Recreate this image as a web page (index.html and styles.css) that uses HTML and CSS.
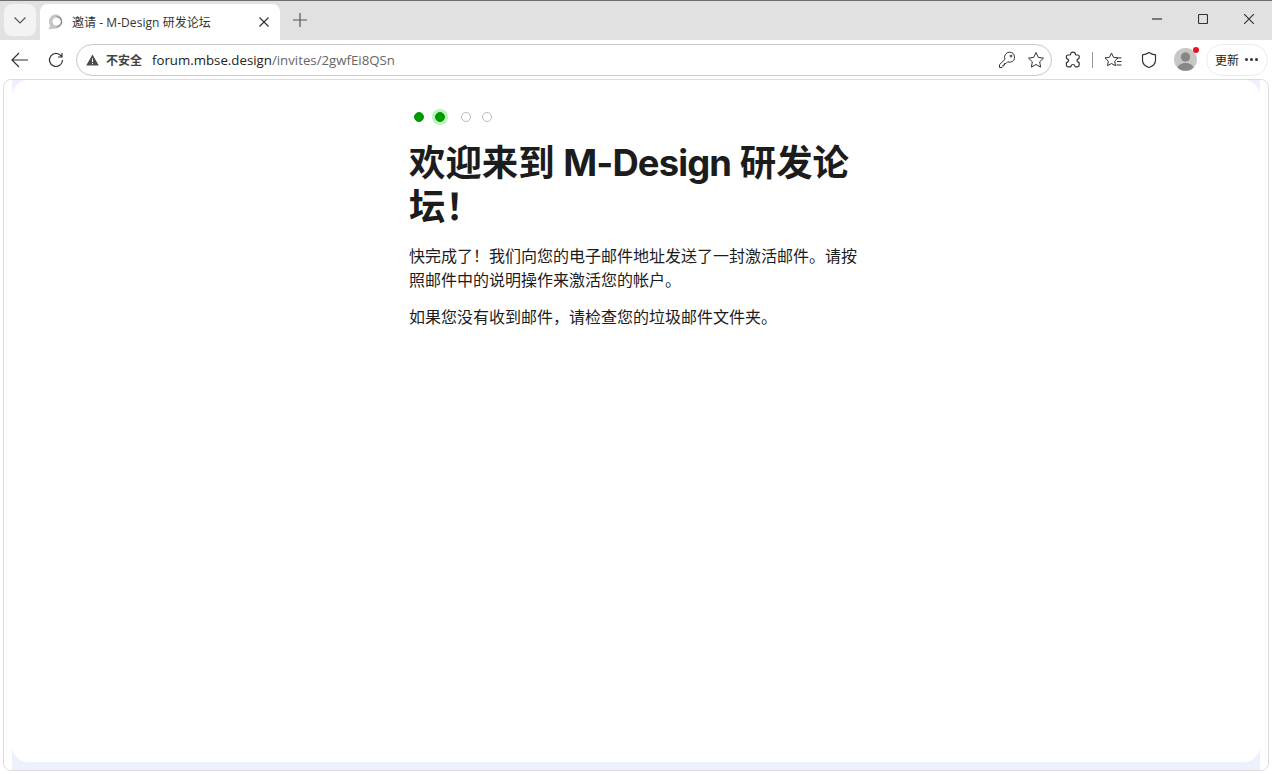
FILE: index.html
```html
<!DOCTYPE html>
<html lang="zh-CN">
<head>
  <meta charset="UTF-8">
  <title>邀请 - M-Design 研发论坛</title>
  <link rel="stylesheet" href="styles.css">
</head>
<body>
  <div class="tabbar">
    <button class="tab-search">
      <svg width="16" height="16" viewBox="0 0 16 16"><path d="M2.500 5.500 8 11l5.500-5.500" class="ln"/></svg>
    </button>
    <div class="tab">
      <svg class="favicon" width="16" height="16" viewBox="0 0 16 16">
        <path d="M8.500.2A7.300 7.300 0 0 0 1 7.600c0 1.500.4 2.900 1.100 4.100L.6 15.800l4.300-1.200A7.400 7.400 0 1 0 8.500.2z" fill="#c6c6c6"/>
        <circle cx="8.600" cy="7.600" r="4.200" fill="#fff"/>
        <path d="M8.600 2.600a5 5 0 0 1 0 10" fill="none" stroke="#8a8a8a" stroke-width="1.300"/>
      </svg>
      <span class="tab-title">邀请 - M-Design 研发论坛</span>
      <svg class="tab-close" width="10" height="10" viewBox="0 0 10 10"><path d="M.5.500l9 9M9.500.500l-9 9" class="ln dark"/></svg>
    </div>
    <svg class="new-tab" width="16" height="16" viewBox="0 0 16 16"><path d="M8 1v14M1 8h14" class="ln"/></svg>
    <div class="win-btns">
      <svg width="10" height="10" viewBox="0 0 10 10"><path d="M0 5h10" class="ln dark"/></svg>
      <svg width="10" height="10" viewBox="0 0 10 10"><rect x=".5" y=".5" width="9" height="9" rx="1" class="ln dark"/></svg>
      <svg width="10" height="10" viewBox="0 0 10 10"><path d="M0 0l10 10M10 0L0 10" class="ln dark"/></svg>
    </div>
  </div>

  <div class="toolbar">
    <svg class="nav-back" width="18" height="16" viewBox="0 0 18 16"><path d="M8 1 1 8l7 7M1 8h16" class="ln dark"/></svg>
    <svg class="nav-reload" width="16" height="16" viewBox="0 0 16 16"><path d="M13.500 4.500A6.500 6.500 0 1 0 14.500 8M14 1v4h-4" class="ln dark"/></svg>
    <div class="omnibox">
      <svg width="13" height="12" viewBox="0 0 13 12"><path d="M6.500.500 12.800 11.500H.2z" fill="#4a4a4a"/><path d="M6.500 4.500v3.500M6.500 9v1.200" stroke="#fff" stroke-width="1"/></svg>
      <span class="not-secure">不安全</span>
      <span class="url"><span class="host">forum.mbse.design</span>/invites/2gwfEi8QSn</span>
      <svg class="omni-key" width="18" height="18" viewBox="0 0 18 18"><path d="M11.500 1.200a5 5 0 0 1 1 9.900 5 5 0 0 1-2.800-.3L8 12.500H6.500V14H5v1.500l-1 1H1.500v-2.800L7 8.300a5 5 0 0 1 4.500-7.100z" class="ln dark thin"/><circle cx="13" cy="5" r="1" class="ln dark thin"/></svg>
      <svg class="omni-star" width="18" height="18" viewBox="0 0 18 18"><path d="M9 1.500l2.300 4.900 5.200.7-3.800 3.700.9 5.300L9 13.500l-4.600 2.600.9-5.300L1.500 7.100l5.200-.7z" class="ln dark thin"/></svg>
    </div>
    <svg class="tool tool-ext" width="18" height="18" viewBox="0 0 18 18"><path d="M6.600 3.200C6.600 2 7.700 1.200 9 1.200S11.400 2 11.400 3.200c0 .5.300.8.8.8h1.600c.8 0 1.400.6 1.400 1.400V7c0 .5-.4.7-.9.9-.8.3-1.300.9-1.300 1.600s.5 1.300 1.300 1.600c.5.2.9.4.9.900v2c0 1-.8 1.800-1.800 1.800h-1.600c-.5 0-.8-.3-.9-.8-.2-.9-1-1.500-1.900-1.500s-1.700.6-1.900 1.500c-.1.500-.4.800-.9.800H4.200c-1 0-1.800-.8-1.800-1.800v-2c0-.5.400-.7.900-.9.800-.3 1.300-.9 1.300-1.600s-.5-1.300-1.300-1.600c-.5-.2-.9-.4-.9-.9V5.400C2.400 4.600 3 4 3.800 4h2c.5 0 .8-.3.800-.8z" class="ln dark"/></svg>
    <span class="tool-sep"></span>
    <svg class="tool tool-fav" width="18" height="18" viewBox="0 0 18 18"><path d="M7.500 2l2 4.300 4.500.6-3.300 3.200.8 4.600-4-2.200-4 2.200.8-4.600L1 6.900l4.500-.6zM12.500 6.900h5M13 10.500h4.500M12.500 14h5" class="ln dark thin"/></svg>
    <svg class="tool tool-shield" width="16" height="18" viewBox="0 0 16 18"><path d="M8 1.500c2 1.400 4 2.200 6.500 2.400v5.300c0 3.400-2.500 6-6.500 7.300-4-1.300-6.500-3.900-6.500-7.300V3.900C4 3.700 6 2.900 8 1.500z" class="ln dark"/></svg>
    <div class="avatar">
      <svg width="23" height="23" viewBox="0 0 23 23"><circle cx="11.500" cy="11.500" r="11.500" fill="#c9c7c6"/><circle cx="11.500" cy="9" r="4.700" fill="#8a8685"/><path d="M3.500 19.500c1-3 4.500-4.500 8-4.500s7 1.500 8 4.500a11.500 11.500 0 0 1-16 0z" fill="#8a8685"/></svg>
      <span class="avatar-dot"></span>
    </div>
    <div class="update-btn">
      <span>更新</span>
      <span class="dots"><i></i><i></i><i></i></span>
    </div>
  </div>

  <div class="viewport">
    <div class="page">
      <main class="invite">
        <div class="steps">
          <span class="step done"></span>
          <span class="step current"></span>
          <span class="step"></span>
          <span class="step"></span>
        </div>
        <h1>欢迎来到 <span class="latin">M-Design</span> 研发论<br>坛！</h1>
        <p>快完成了！我们向您的电子邮件地址发送了一封激活邮件。请按照邮件中的说明操作来激活您的帐户。</p>
        <p>如果您没有收到邮件，请检查您的垃圾邮件文件夹。</p>
      </main>
    </div>
  </div>
</body>
</html>
```

FILE: styles.css
```css
* {
  box-sizing: border-box;
}
body {
  margin: 0;
  height: 774px;
  overflow: hidden;
  background: #fff;
  font-family: "Liberation Sans", "Noto Sans CJK SC", sans-serif;
  display: flex;
  flex-direction: column;
}
.ln {
  fill: none;
  stroke: #555;
  stroke-width: 1.200;
}
.ln.dark {
  stroke: #333;
}
.ln.thin {
  stroke-width: 1;
}

.tabbar {
  height: 40px;
  background: #e1e1e1;
  border-top: 1px solid #6f6f6f;
  display: flex;
  align-items: flex-start;
  padding-left: 4px;
  flex: none;
}
.tab-search {
  width: 32px;
  height: 32px;
  margin-top: 3px;
  border: 0;
  border-radius: 8px;
  background: #f3f3f3;
  display: flex;
  align-items: center;
  justify-content: center;
  padding: 0;
}
.tab {
  width: 240px;
  height: 36px;
  margin: 3px 0 0 4px;
  background: #fff;
  border-radius: 8px 8px 0 0;
  display: flex;
  align-items: center;
  padding: 0 11px 0 8px;
}
.tab-title {
  margin-left: 8px;
  font-family: "Open Sans", "Noto Sans CJK SC", sans-serif;
  font-size: 12px;
  letter-spacing: .05px;
  color: #333;
  flex: 1;
}
.new-tab {
  margin: 11px 0 0 12px;
}
.win-btns {
  margin-left: auto;
  display: flex;
  gap: 36px;
  padding: 13px 18px 0 0;
}

.toolbar {
  height: 39px;
  background: #fff;
  display: flex;
  align-items: center;
  padding-left: 11px;
  flex: none;
}
.nav-back {
  flex: none;
}
.nav-reload {
  margin-left: 19px;
  flex: none;
}
.omnibox {
  width: 976px;
  height: 32px;
  margin-left: 12px;
  border: 1px solid #c9c9c9;
  border-radius: 16px;
  display: flex;
  align-items: center;
  padding: 0 6px 0 9px;
  flex: none;
}
.not-secure {
  margin-left: 7px;
  font-size: 12px;
  font-weight: 700;
  color: #444;
}
.url {
  margin-left: 10px;
  font-family: "Open Sans", "Noto Sans CJK SC", sans-serif;
  font-size: 13.250px;
  color: #666;
}
.host {
  color: #222;
}
.omni-key {
  margin-left: auto;
}
.omni-star {
  margin-left: 11px;
}
.tool {
  flex: none;
}
.tool-ext {
  margin-left: 12px;
}
.tool-sep {
  width: 1px;
  height: 16px;
  margin-left: 10px;
  background: #999;
}
.tool-fav {
  margin-left: 11px;
}
.tool-shield {
  margin-left: 19px;
}
.avatar {
  width: 23px;
  height: 23px;
  margin-left: 17px;
  flex: none;
  position: relative;
}
.avatar svg {
  display: block;
}
.avatar-dot {
  position: absolute;
  top: -1px;
  right: -2px;
  width: 6px;
  height: 6px;
  background: #e81123;
  border-radius: 50%;
}
.update-btn {
  width: 62px;
  height: 32px;
  margin-left: 9px;
  border: 1px solid #ececec;
  border-radius: 16px;
  display: flex;
  align-items: center;
  padding-left: 8px;
  font-size: 12px;
  color: #222;
  flex: none;
}
.dots {
  display: flex;
  gap: 2px;
  margin-left: 6px;
}
.dots i {
  width: 3px;
  height: 3px;
  background: #333;
  border-radius: 50%;
}

.viewport {
  height: 692px;
  margin: 0 3px;
  border: 1px solid #dcdcdc;
  border-radius: 8px;
  background: #fff;
  padding: 0 8px;
  flex: none;
  overflow: hidden;
}
.page {
  height: 100%;
  background: #edf0fd;
  padding-bottom: 8px;
}
.invite {
  height: 100%;
  background: #fff;
  border-radius: 16px;
  padding: 30px 0 0 397px;
}
.steps {
  display: flex;
  align-items: center;
  height: 14px;
  margin-left: 5px;
}
.step {
  width: 10px;
  height: 10px;
  border: 1px solid #bbb;
  border-radius: 50%;
  margin-right: 11px;
  background: #fff;
}
.step.done, .step.current {
  background: #009900;
  border-color: #009900;
}
.step.current {
  box-shadow: 0 0 0 3px #b8f5b8;
  margin-right: 16px;
}
h1 {
  width: 460px;
  margin: 17px 0 0;
  font-family: Inter, "Noto Sans CJK SC", sans-serif;
  font-size: 36.400px;
  font-weight: 700;
  line-height: 44px;
  color: #1c1c1c;
}
.latin {
  letter-spacing: -.850px;
}
p {
  width: 460px;
  margin: 13px 0 0;
  font-family: Inter, "Noto Sans CJK SC", sans-serif;
  font-size: 16px;
  line-height: 24px;
  color: #1c1c1c;
}
h1 + p {
  margin-top: 15px;
}
```
